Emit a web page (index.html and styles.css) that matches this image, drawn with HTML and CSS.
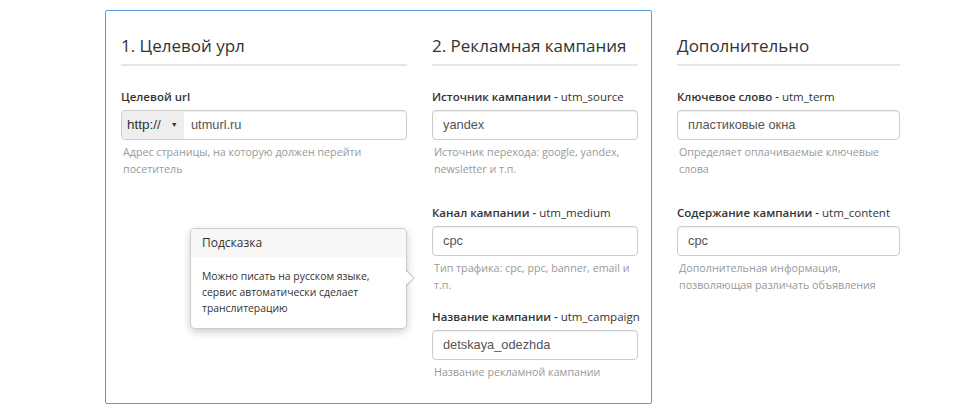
FILE: index.html
```html
<!DOCTYPE html>
<html lang="ru">
<head>
  <meta charset="UTF-8" />
  <title>UTM генератор</title>
  <link rel="stylesheet" href="styles.css">
</head>
<body>

  <div class="page">

    <!-- основная рамка: урл + кампания -->
    <div class="main-box">

      <div class="col col-url">
        <h3 class="col-title">1. Целевой урл</h3>
        <div class="form-group">
          <label class="field-label"><b>Целевой url</b></label>
          <div class="url-group">
            <div class="proto-select">http://<span class="caret">&#9660;</span></div>
            <div class="url-input">utmurl.ru</div>
          </div>
          <p class="help">Адрес страницы, на которую должен перейти посетитель</p>
        </div>

        <!-- подсказка -->
        <div class="popover">
          <div class="popover-title">Подсказка</div>
          <div class="popover-content">Можно писать на русском языке, сервис автоматически сделает транслитерацию</div>
          <div class="popover-arrow"></div>
        </div>
      </div>

      <div class="col col-campaign">
        <h3 class="col-title">2. Рекламная кампания</h3>
        <div class="form-group first">
          <label class="field-label"><b>Источник кампании -</b> utm_source</label>
          <div class="input">yandex</div>
          <p class="help">Источник перехода: google, yandex, newsletter и т.п.</p>
        </div>
        <div class="form-group">
          <label class="field-label"><b>Канал кампании -</b> utm_medium</label>
          <div class="input">cpc</div>
          <p class="help">Тип трафика: cpc, ppc, banner, email и т.п.</p>
        </div>
        <div class="form-group">
          <label class="field-label"><b>Название кампании -</b> utm_campaign</label>
          <div class="input">detskaya_odezhda</div>
          <p class="help">Название рекламной кампании</p>
        </div>
      </div>

    </div>

    <!-- дополнительно -->
    <div class="col col-extra">
      <h3 class="col-title">Дополнительно</h3>
      <div class="form-group first">
        <label class="field-label"><b>Ключевое слово -</b> utm_term</label>
        <div class="input">пластиковые окна</div>
        <p class="help">Определяет оплачиваемые ключевые слова</p>
      </div>
      <div class="form-group">
        <label class="field-label"><b>Содержание кампании -</b> utm_content</label>
        <div class="input">cpc</div>
        <p class="help">Дополнительная информация, позволяющая различать объявления</p>
      </div>
    </div>

  </div>

</body>
</html>
```

FILE: styles.css
```css
body {
  margin: 0;
  font-family: "Open Sans", "Noto Sans", sans-serif;
  color: #333;
  background: #fff;
}

.page {
  display: flex;
  align-items: flex-start;
  padding: 10px 0 0 105px;
}

.main-box {
  display: flex;
  gap: 25px;
  width: 517px;
  padding: 24px 13px 22px 15px;
  box-sizing: content-box;
  border: 1px solid #5b9bd5;
  border-radius: 2px;
}

.col {
  position: relative;
  min-width: 0;
  flex-shrink: 0;
}

.col-url {
  width: 286px;
}

.col-campaign {
  width: 206px;
}

.col-extra {
  width: 223px;
  margin-left: 25px;
  padding-top: 25px;
}

.col-title {
  margin: 0;
  padding-bottom: 7px;
  font-size: 17px;
  font-weight: 400;
  line-height: 22px;
  border-bottom: 2px solid #e6e6e6;
  white-space: nowrap;
}

.form-group {
  margin-top: 22px;
}

.form-group + .form-group {
  margin-top: 26px;
}

.form-group.first + .form-group + .form-group {
  margin-top: 14px;
}

.field-label {
  display: block;
  margin-bottom: 4px;
  font-size: 11.5px;
  line-height: 18px;
  font-weight: 400;
  white-space: nowrap;
}

.field-label b {
  font-weight: 600;
}

.input,
.url-group {
  height: 30px;
  box-sizing: border-box;
  border: 1px solid #ccc;
  border-radius: 4px;
  box-shadow: inset 0 1px 1px rgba(0, 0, 0, 0.075);
  font-family: "Liberation Sans", Arial, sans-serif;
  font-size: 12.8px;
  line-height: 28px;
  color: #555;
}

.input {
  padding: 0 10px;
}

.url-group {
  display: flex;
  overflow: hidden;
}

.proto-select {
  width: 62px;
  padding-left: 5px;
  background: #eee;
  color: #333;
  font-size: 13.5px;
  box-sizing: border-box;
}

.caret {
  margin-left: 10px;
  font-size: 7px;
  vertical-align: 2px;
}

.url-input {
  padding-left: 7px;
}

.help {
  margin: 4px 0 0;
  padding-left: 2px;
  font-size: 10.7px;
  line-height: 17px;
  color: #999;
}

/* подсказка */
.popover {
  position: absolute;
  left: 69px;
  top: 193px;
  width: 217px;
  box-sizing: border-box;
  background: #fff;
  border: 1px solid rgba(0, 0, 0, 0.2);
  border-radius: 5px;
  box-shadow: 0 3px 8px rgba(0, 0, 0, 0.2);
  font-size: 10.4px;
  line-height: 16px;
}

.popover-title {
  padding: 6px 11px;
  font-size: 12px;
  line-height: 16px;
  background: #f7f7f7;
  border-radius: 5px 5px 0 0;
}

.popover-content {
  padding: 11px 11px 12px;
}

.popover-arrow {
  position: absolute;
  right: -9px;
  top: 40px;
  width: 0;
  height: 0;
  border-top: 9px solid transparent;
  border-bottom: 9px solid transparent;
  border-left: 9px solid rgba(0, 0, 0, 0.15);
}

.popover-arrow::after {
  content: "";
  position: absolute;
  left: -10px;
  top: -8px;
  border-top: 8px solid transparent;
  border-bottom: 8px solid transparent;
  border-left: 8px solid #fff;
}
```
